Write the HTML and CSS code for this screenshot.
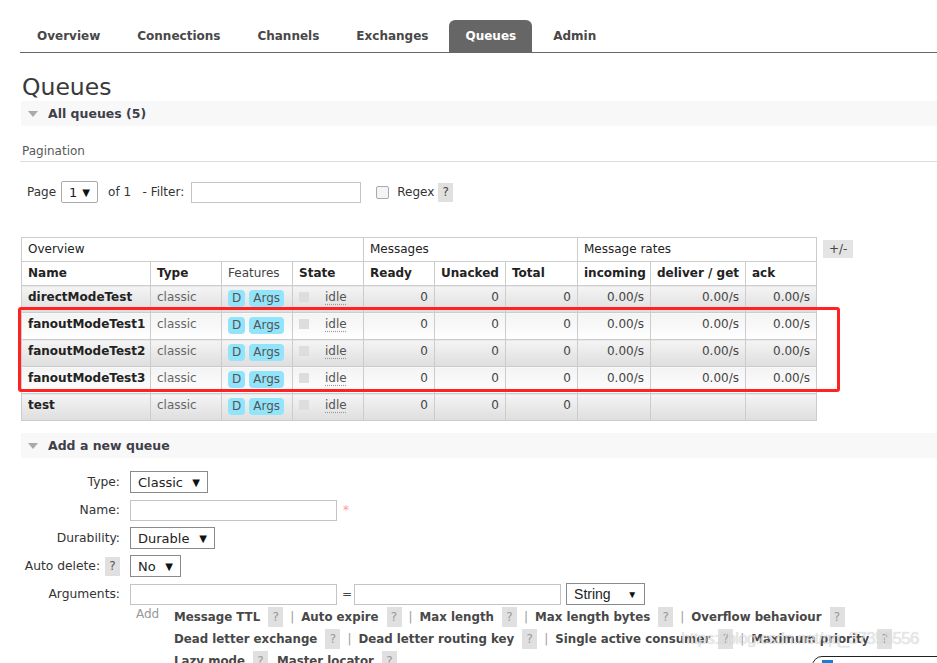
FILE: index.html
```
<!DOCTYPE html>
<html>
<head>
<meta charset="utf-8">
<link rel="stylesheet" href="styles.css">
</head>
<body>
<div class="page">
  <ul class="nav">
    <li class="tab first">Overview</li>
    <li class="tab">Connections</li>
    <li class="tab">Channels</li>
    <li class="tab">Exchanges</li>
    <li class="tab active">Queues</li>
    <li class="tab">Admin</li>
  </ul>

  <h1 class="title">Queues</h1>

  <div class="section-bar"><span class="tri"></span><span class="bar-text">All queues (5)</span></div>

  <h3 class="pag-title">Pagination</h3>

  <div class="filter-row">
    <span class="lbl">Page</span>
    <div class="select sel-page"><span>1</span><span class="arrow">▼</span></div>
    <span class="lbl of">of 1&nbsp;&nbsp; - Filter:</span>
    <div class="input in-filter"></div>
    <span class="checkbox"></span>
    <span class="lbl regex">Regex</span>
    <span class="help dark">?</span>
  </div>

  <div class="table-wrap">
    <table class="list">
      <colgroup>
        <col style="width:129px"><col style="width:71px"><col style="width:71px"><col style="width:71px">
        <col style="width:71px"><col style="width:71px"><col style="width:72px">
        <col style="width:73px"><col style="width:95px"><col style="width:71px">
      </colgroup>
      <thead>
        <tr class="grp">
          <th colspan="4">Overview</th>
          <th colspan="3">Messages</th>
          <th colspan="3">Message rates</th>
        </tr>
        <tr class="cols">
          <th>Name</th><th>Type</th><th class="normal">Features</th><th>State</th>
          <th>Ready</th><th>Unacked</th><th>Total</th>
          <th>incoming</th><th>deliver / get</th><th>ack</th>
        </tr>
      </thead>
      <tbody>
        <tr class="alt1">
          <td class="name">directModeTest</td><td class="type">classic</td>
          <td><span class="badge">D</span><span class="badge">Args</span></td>
          <td><span class="state-box"></span><span class="idle">idle</span></td>
          <td class="num">0</td><td class="num">0</td><td class="num">0</td>
          <td class="num">0.00/s</td><td class="num">0.00/s</td><td class="num">0.00/s</td>
        </tr>
        <tr class="alt2">
          <td class="name">fanoutModeTest1</td><td class="type">classic</td>
          <td><span class="badge">D</span><span class="badge">Args</span></td>
          <td><span class="state-box"></span><span class="idle">idle</span></td>
          <td class="num">0</td><td class="num">0</td><td class="num">0</td>
          <td class="num">0.00/s</td><td class="num">0.00/s</td><td class="num">0.00/s</td>
        </tr>
        <tr class="alt1">
          <td class="name">fanoutModeTest2</td><td class="type">classic</td>
          <td><span class="badge">D</span><span class="badge">Args</span></td>
          <td><span class="state-box"></span><span class="idle">idle</span></td>
          <td class="num">0</td><td class="num">0</td><td class="num">0</td>
          <td class="num">0.00/s</td><td class="num">0.00/s</td><td class="num">0.00/s</td>
        </tr>
        <tr class="alt2">
          <td class="name">fanoutModeTest3</td><td class="type">classic</td>
          <td><span class="badge">D</span><span class="badge">Args</span></td>
          <td><span class="state-box"></span><span class="idle">idle</span></td>
          <td class="num">0</td><td class="num">0</td><td class="num">0</td>
          <td class="num">0.00/s</td><td class="num">0.00/s</td><td class="num">0.00/s</td>
        </tr>
        <tr class="alt1">
          <td class="name">test</td><td class="type">classic</td>
          <td><span class="badge">D</span><span class="badge">Args</span></td>
          <td><span class="state-box"></span><span class="idle">idle</span></td>
          <td class="num">0</td><td class="num">0</td><td class="num">0</td>
          <td></td><td></td><td></td>
        </tr>
      </tbody>
    </table>
    <span class="plusminus">+/-</span>
    <div class="red-box"></div>
  </div>

  <div class="section-bar add-bar"><span class="tri"></span><span class="bar-text">Add a new queue</span></div>

  <div class="form">
    <div class="frow">
      <div class="flabel">Type:</div>
      <div class="select sel-type"><span>Classic</span><span class="arrow">▼</span></div>
    </div>
    <div class="frow">
      <div class="flabel">Name:</div>
      <div class="input in-name"></div>
      <span class="req">*</span>
    </div>
    <div class="frow">
      <div class="flabel">Durability:</div>
      <div class="select sel-dur"><span>Durable</span><span class="arrow">▼</span></div>
    </div>
    <div class="frow">
      <div class="flabel">Auto delete: <span class="help">?</span></div>
      <div class="select sel-no"><span>No</span><span class="arrow">▼</span></div>
    </div>
    <div class="frow">
      <div class="flabel">Arguments:</div>
      <div class="input in-arg"></div>
      <span class="eq">=</span>
      <div class="input in-val"></div>
      <div class="select sel-str"><span>String</span><span class="arrow">▼</span></div>
    </div>
    <div class="add-row">
      <span class="add">Add</span>
      <div class="links">
        <div class="lline">
          <span class="alink">Message TTL</span><span class="help">?</span><span class="sep">|</span>
          <span class="alink">Auto expire</span><span class="help">?</span><span class="sep">|</span>
          <span class="alink">Max length</span><span class="help">?</span><span class="sep">|</span>
          <span class="alink">Max length bytes</span><span class="help">?</span><span class="sep">|</span>
          <span class="alink">Overflow behaviour</span><span class="help">?</span>
        </div>
        <div class="lline">
          <span class="alink">Dead letter exchange</span><span class="help">?</span><span class="sep">|</span>
          <span class="alink">Dead letter routing key</span><span class="help">?</span><span class="sep">|</span>
          <span class="alink">Single active consumer</span><span class="help">?</span><span class="sep">|</span>
          <span class="alink">Maximum priority</span><span class="help">?</span>
        </div>
        <div class="lline">
          <span class="alink">Lazy mode</span><span class="help">?</span>
          <span class="alink gap">Master locator</span><span class="help">?</span>
        </div>
      </div>
    </div>
  </div>
</div>
<div class="watermark">https://blog.csdn.net/qq_37356556</div>
<div class="corner-widget"><span class="corner-blue"></span></div>
</body>
</html>
```
FILE: styles.css
```
html, body {
  margin: 0;
  padding: 0;
  background: #fff;
  overflow: hidden;
}
body {
  font-family: "DejaVu Sans", Verdana, sans-serif;
  font-size: 12px;
  color: #484848;
  width: 937px;
  height: 663px;
  position: relative;
}
.page {
  padding-left: 20px;
}
.nav {
  list-style: none;
  margin: 20px 0 0 0;
  padding: 0;
  display: flex;
  height: 32px;
  border-bottom: 1px solid #666;
}
.tab {
  font-weight: bold;
  font-size: 12px;
  line-height: 32px;
  padding: 0 16px;
  margin-right: 5px;
  color: #484848;
}
.tab.first {
  padding-left: 17px;
  margin-right: 5px;
}
.tab.active {
  background: #666;
  color: #fff;
  border-radius: 6px 6px 0 0;
}
.title {
  margin: 21px 0 0 2px;
  font-size: 23.5px;
  font-weight: normal;
  line-height: 27px;
  color: #3a3a3a;
}
.section-bar {
  background: #f8f8f8;
  height: 25px;
  display: flex;
  align-items: center;
  margin-left: 1px;
}
.tri {
  width: 0;
  height: 0;
  border-left: 5px solid transparent;
  border-right: 5px solid transparent;
  border-top: 6px solid #aaa;
  margin: 0 10px 0 7px;
}
.bar-text {
  font-weight: bold;
  font-size: 12.5px;
  color: #3f3f4a;
}
.pag-title {
  margin: 17px 0 0 0;
  padding: 0 0 2px 2px;
  font-size: 12px;
  font-weight: normal;
  line-height: 16px;
  color: #5a5a5a;
  border-bottom: 1px solid #ddd;
}
.filter-row {
  display: flex;
  align-items: center;
  margin-top: 19px;
  padding-left: 7px;
  height: 22px;
  color: #333;
}
.select {
  display: flex;
  align-items: center;
  justify-content: space-between;
  box-sizing: border-box;
  height: 22px;
  border: 1px solid #8a8a8a;
  background: #fff;
  color: #222;
  font-size: 13px;
  padding: 0 7px 0 7px;
}
.select .arrow {
  font-size: 10px;
  color: #111;
}
.sel-page {
  width: 37px;
  margin-left: 5px;
  border-color: #aaa;
  border-radius: 2px;
}
.of {
  margin-left: 10px;
}
.input {
  box-sizing: border-box;
  height: 21px;
  border: 1px solid #c4c4c4;
  background: #fff;
}
.in-filter {
  width: 170px;
  margin-left: 7px;
}
.checkbox {
  width: 11px;
  height: 11px;
  border: 1px solid #aaa;
  border-radius: 2px;
  background: #f4f4f4;
  margin-left: 15px;
}
.regex {
  margin-left: 8px;
}
.help {
  display: inline-block;
  background: #e0e0e0;
  color: #999;
  font-size: 12px;
  line-height: 19px;
  width: 15px;
  text-align: center;
  font-weight: normal;
}
.help.dark {
  color: #444;
  margin-left: 4px;
}
.table-wrap {
  position: relative;
  display: flex;
  align-items: flex-start;
  margin-top: 34px;
  margin-left: 1px;
}
table.list {
  border-collapse: collapse;
  table-layout: fixed;
  width: 795px;
}
table.list th, table.list td {
  border: 1px solid #ccc;
  padding: 0 6px;
  text-align: left;
  white-space: nowrap;
  overflow: hidden;
}
table.list th {
  height: 24px;
  box-sizing: border-box;
  line-height: 15px;
  color: #222;
  background: #fff;
}
.grp th {
  font-weight: normal;
  color: #444;
}
.cols th {
  font-weight: bold;
}
.cols th.normal {
  font-weight: normal;
  color: #444;
}
table.list td {
  height: 27px;
  line-height: 16px;
  vertical-align: top;
  padding-top: 3px;
  box-sizing: border-box;
}
tr.alt1 td {
  background: linear-gradient(to bottom, #f4f4f4, #dedede);
}
tr.alt2 td {
  background: linear-gradient(to bottom, #f3f3f3, #ffffff);
}
table.list td.name {
  font-weight: bold;
  color: #222;
}
table.list td.type {
  color: #666;
}
table.list td.num {
  text-align: right;
  color: #444;
}
.badge {
  display: inline-block;
  vertical-align: top;
  margin-top: 1px;
  background: #92e4fa;
  color: #555;
  border-radius: 4px;
  padding: 0 4px;
  line-height: 17px;
  margin-right: 4px;
}
.state-box {
  display: inline-block;
  vertical-align: top;
  width: 10px;
  height: 10px;
  background: #ddd;
  margin: 3px 16px 0 0;
}
.idle {
  color: #555;
  text-decoration: underline dotted #999;
  text-underline-offset: 3px;
}
.plusminus {
  margin: 3px 0 0 6px;
  background: #e4e4e4;
  padding: 0 6px;
  line-height: 18px;
  color: #444;
}
.red-box {
  position: absolute;
  left: -3px;
  top: 70px;
  width: 816px;
  height: 79px;
  border: 3px solid #f22;
  border-radius: 3px;
}
.add-bar {
  margin-top: 12px;
}
.form {
  margin-top: 13px;
}
.frow {
  display: flex;
  align-items: center;
  height: 22px;
  margin-bottom: 6px;
}
.flabel {
  width: 100px;
  text-align: right;
  margin-right: 10px;
  color: #333;
  font-size: 12.3px;
}
.flabel .help {
  color: #555;
  margin-left: 1px;
}
.sel-type { width: 78px; }
.sel-dur { width: 85px; }
.sel-no { width: 51px; }
.sel-str {
  width: 79px;
  margin-left: 5px;
  font-family: "Liberation Sans", Arial, sans-serif;
  font-size: 14px;
}
.in-name { width: 207px; }
.req {
  color: #f99;
  margin-left: 6px;
  font-size: 12px;
}
.in-arg { width: 207px; }
.eq {
  margin: 0 2px 0 5px;
  color: #444;
}
.in-val { width: 207px; }
.add-row {
  display: flex;
  margin-left: 116px;
  margin-top: -5px;
}
.add {
  color: #999;
  margin-top: 1px;
  width: 38px;
}
.links {
  display: flex;
  flex-direction: column;
}
.lline {
  display: flex;
  align-items: center;
  height: 22px;
  white-space: nowrap;
}
.alink {
  font-weight: bold;
  color: #484848;
  font-size: 11.8px;
}
.alink.gap {
  margin-left: 9px;
}
.lline .help {
  margin-left: 8px;
  line-height: 20px;
}
.sep {
  color: #999;
  margin: 0 7px 0 7px;
}
.watermark {
  position: absolute;
  left: 681px;
  top: 629px;
  font-family: "Liberation Sans", Arial, sans-serif;
  font-size: 17px;
  letter-spacing: -0.7px;
  color: rgba(235, 235, 235, 0.75);
  text-shadow: 0 0 1px rgba(120,120,120,0.35);
}
.corner-widget {
  position: absolute;
  left: 812px;
  top: 656px;
  width: 140px;
  height: 30px;
  border: 1px solid #222;
  border-radius: 10px;
  background: #fff;
}
.corner-blue {
  position: absolute;
  left: 9px;
  top: 3px;
  width: 11px;
  height: 8px;
  background: #1a7fd0;
}
```
